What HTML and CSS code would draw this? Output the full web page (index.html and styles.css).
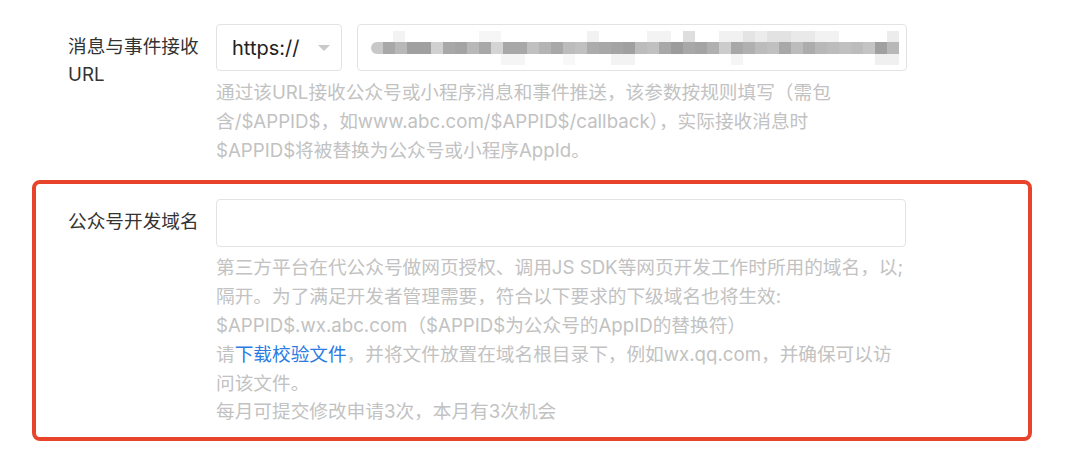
FILE: index.html
```html
<!DOCTYPE html>
<html lang="zh-CN">
<head>
    <meta charset="UTF-8">
    <meta name="viewport" content="width=device-width, initial-scale=1.0">
    <title>开发配置</title>
    <link rel="stylesheet" href="styles.css">
</head>
<body>
    <div class="form">
        <!-- 消息与事件接收URL -->
        <div class="form-row">
            <label class="form-label">消息与事件接收URL</label>
            <div class="form-body">
                <div class="input-group">
                    <div class="select-box">
                        <span>https://</span>
                        <span class="arrow"></span>
                    </div>
                    <div class="input-box url-input">
                        <!-- 打码后的URL -->
                        <div class="blurred">
                            <div class="blur-top"></div>
                            <div class="blur-mid"></div>
                            <div class="blur-bottom"></div>
                        </div>
                    </div>
                </div>
                <p class="tips">
                    通过该URL接收公众号或小程序消息和事件推送，该参数按规则填写（需包<br>
                    含/$APPID$，如www.abc.com/$APPID$/callback），实际接收消息时<br>
                    $APPID$将被替换为公众号或小程序AppId。
                </p>
            </div>
        </div>

        <!-- 公众号开发域名 -->
        <div class="form-row highlighted">
            <label class="form-label">公众号开发域名</label>
            <div class="form-body">
                <div class="input-box domain-input"></div>
                <p class="tips">
                    第三方平台在代公众号做网页授权、调用JS SDK等网页开发工作时所用的域名，以;<br>
                    隔开。为了满足开发者管理需要，符合以下要求的下级域名也将生效:<br>
                    $APPID$.wx.abc.com（$APPID$为公众号的AppID的替换符）<br>
                    请<a href="#" class="link">下载校验文件</a>，并将文件放置在域名根目录下，例如wx.qq.com，并确保可以访<br>
                    问该文件。<br>
                    每月可提交修改申请3次，本月有3次机会
                </p>
            </div>
        </div>
    </div>
</body>
</html>
```

FILE: styles.css
```css
body {
    margin: 0;
    padding: 0;
    background-color: #ffffff;
    font-family: Inter, "Noto Sans CJK SC", sans-serif;
    font-size: 18.67px;
    color: #333333;
}

.form {
    padding-top: 24px;
}

.form-row {
    display: flex;
    padding-left: 68px;
}

.form-label {
    width: 132px;
    flex-shrink: 0;
    padding-top: 9px;
    margin-right: 16px;
    line-height: 28px;
}

.form-body {
    display: flex;
    flex-direction: column;
}

.input-group {
    display: flex;
    gap: 15px;
}

.select-box {
    width: 126px;
    height: 47px;
    box-sizing: border-box;
    border: 1px solid #e3e3e3;
    border-radius: 4px;
    display: flex;
    align-items: center;
    justify-content: space-between;
    padding: 0 11px 0 15px;
    font-size: 20px;
    color: #222222;
}

.arrow {
    width: 0;
    height: 0;
    border-left: 6px solid transparent;
    border-right: 6px solid transparent;
    border-top: 6px solid #c9c9c9;
}

.input-box {
    height: 47px;
    box-sizing: border-box;
    border: 1px solid #e3e3e3;
    border-radius: 4px;
}

.url-input {
    width: 550px;
    display: flex;
    align-items: center;
    padding-left: 13px;
}

.blurred {
    display: flex;
    flex-direction: column;
    width: 528px;
}

.blur-top,
.blur-bottom {
    height: 11px;
}

.blur-top {
    background: linear-gradient(90deg,
        transparent 0 22px, #f3f3f3 22px 34px, transparent 34px 108px,
        #f6f6f6 108px 130px, transparent 130px 216px, #f2f2f2 216px 228px,
        transparent 228px 276px, #f3f3f3 276px 300px, transparent 300px 312px,
        #dedede 312px 324px, transparent 324px 348px, #f1f1f1 348px 372px,
        #e4e4e4 372px 384px, #ececec 384px 396px, #e2e2e2 396px 420px,
        #e9e9e9 420px 444px, #f2f2f2 444px 468px, transparent 468px 516px,
        #ececec 516px 528px);
}

.blur-mid {
    height: 12px;
    border-radius: 6px 0 0 6px;
    background: linear-gradient(90deg,
        #c8c8c8 0 12px, #a8a8a8 12px 24px, #b8b8b8 24px 36px, #a0a0a0 36px 60px,
        #d0d0d0 60px 72px, #a8a8a8 72px 84px, #a4a4a4 84px 96px, #b8b8b8 96px 108px,
        #a8a8a8 108px 120px, #d4d4d4 120px 132px, #a8a8a8 132px 156px,
        #c0c0c0 156px 168px, #b4b4b4 168px 180px, #a8a8a8 180px 192px,
        #bcbcbc 192px 204px, #c0c0c0 204px 216px, #acacac 216px 228px,
        #a8a8a8 228px 240px, #a4a4a4 240px 252px, #a0a0a0 252px 264px,
        #bcbcbc 264px 276px, #c0c0c0 276px 288px, #a8a8a8 288px 300px,
        #9c9c9c 300px 312px, #a8a8a8 312px 324px, #a4a4a4 324px 336px,
        #b0b0b0 336px 348px, #cccccc 348px 360px, #a8a8a8 360px 372px,
        #b0b0b0 372px 384px, #bcbcbc 384px 396px, #c0c0c0 396px 408px,
        #a8a8a8 408px 420px, #bcbcbc 420px 432px, #acacac 432px 444px,
        #b8b8b8 444px 456px, #bcbcbc 456px 468px, #c0c0c0 468px 480px,
        #bcbcbc 480px 492px, #c4c4c4 492px 504px, #a0a0a0 504px 516px,
        #b8b8b8 516px 528px);
}

.blur-bottom {
    background: linear-gradient(90deg,
        transparent 0 130px, #f5f5f5 130px 154px, transparent 154px 192px,
        #f8f8f8 192px 204px, transparent 204px 240px, #f3f3f3 240px 264px,
        transparent 264px 360px, #f5f5f5 360px 372px, transparent 372px 504px,
        #f0f0f0 504px 528px);
}

.domain-input {
    width: 690px;
    height: 48px;
}

.tips {
    margin: 8px 0 0;
    font-size: 18.67px;
    line-height: 28.8px;
    color: #c2c2c2;
    white-space: nowrap;
}

.link {
    color: #2b7be3;
    text-decoration: none;
}

.highlighted {
    width: 1000px;
    box-sizing: border-box;
    margin: 15px 0 0 32px;
    padding: 15px 0 10px 32px;
    border: 4px solid #e8432b;
    border-radius: 8px;
}

.highlighted .tips {
    margin-top: 7px;
}
```
